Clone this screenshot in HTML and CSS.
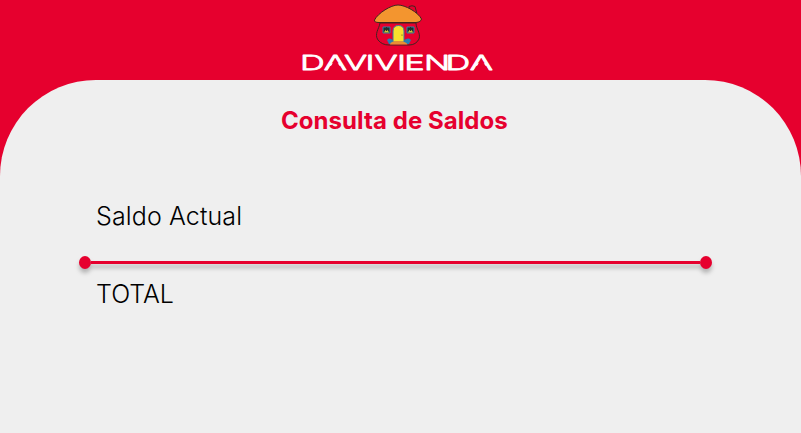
FILE: index.html
```html
<!DOCTYPE html>
<html lang="es">
<head>
<meta charset="utf-8">
<title>Consulta de Saldos</title>
<link rel="stylesheet" href="styles.css">
</head>
<body>
<header class="header">
  <svg class="logo" viewBox="300 0 196 76" width="196" height="76">
    <g stroke="#412420" stroke-width="1" stroke-linejoin="round">
      <path d="M409 9V6.500Q412 5 415 6.500L417 14" fill="#e6002e"/>
      <path d="M380 23C379 29 374 34 378 40Q382 45 389 45H409Q416 45 419 39C421 33 416 29 416 23Z" fill="#e6002e"/>
      <path d="M374.500 20C378 13 391 5 398 5C405 5 418 12 421.500 19Q421 22 416 22.500H379Q374 22.500 374.500 20Z" fill="#f3952f"/>
    </g>
    <path d="M387 40Q390 37 393 40.500V44H389ZM404 40.500Q408 37 411 40L409 44H404Z" fill="#2580b4"/>
    <path d="M393 42V31Q393 25.500 398.500 25.500T404 31V42Z" fill="#f9e12c" stroke="#3879a0"/>
    <path d="M390 44.500Q390 41 398 41T407.500 44.500Z" fill="#e98e34"/>
    <g fill="#20302e" stroke="#3383a9" stroke-width="1">
      <path d="M383 27H390V33H383ZM407 27H414V33H407Z"/>
    </g>
    <path d="M383.700 32.500L386.500 29L389.300 32.500ZM407.700 32.500L410.500 29L413.300 32.500Z" fill="#cbc637"/>
    <path d="M386.500 27V31M410.500 27V31" stroke="#20302e"/>
    <circle cx="402" cy="35" r=".6" fill="#50411d"/>
    <g class="wordmark">
      <text transform="translate(0 69.700) scale(1.68 1)" x="186 199.600 211.600 220.200 229.800 239 246.700 260.100 272.600 286.500">DAVIVIENDA</text>
      <path class="cut" d="M328 70.500L335.300 59.500L342.600 70.500ZM474 70.500L481.300 59.500L488.600 70.500Z"/>
    </g>
  </svg>
</header>
<main class="panel">
  <h1 class="title">Consulta de Saldos</h1>
  <section class="balances">
    <p class="label">Saldo Actual</p>
    <div class="divider"><span class="dot"></span><span class="line"></span><span class="dot"></span></div>
    <p class="label total">TOTAL</p>
  </section>
</main>
</body>
</html>
```
FILE: styles.css
```css
* { box-sizing: border-box; }
body { margin: 0; height: 433px; overflow: hidden; background: #e6002e; font-family: Inter, sans-serif; }
.header { height: 80px; padding-left: 300px; }
.logo { display: block; }
.wordmark text { font-family: Inter, sans-serif; font-size: 20.5px; font-weight: 300; fill: #fff; stroke: #fff; stroke-width: .75px; stroke-linejoin: round; text-anchor: middle; }
.cut { fill: #e6002e; }
.panel { height: 353px; padding-top: 26px; background: #efefef; border-radius: 96px 96px 0 0; }
.title { margin: 0 0 0 281px; font-size: 24px; line-height: 30px; letter-spacing: .06px; font-weight: 700; color: #e6002e; white-space: nowrap; }
.balances { width: 633px; margin: 65px 0 0 79px; }
.label { margin: 0 0 0 17px; font-size: 25px; line-height: 30px; letter-spacing: .12px; font-weight: 300; color: #000; }
.divider { display: flex; align-items: center; height: 13px; margin-top: 25px; filter: drop-shadow(0 4px 2px rgba(0, 0, 0, .25)); }
.dot { width: 12px; height: 13px; border-radius: 50%; background: #e6002e; }
.line { flex: 1; height: 3px; background: #e6002e; }
.total { margin-top: 10px; letter-spacing: 0; }
```
